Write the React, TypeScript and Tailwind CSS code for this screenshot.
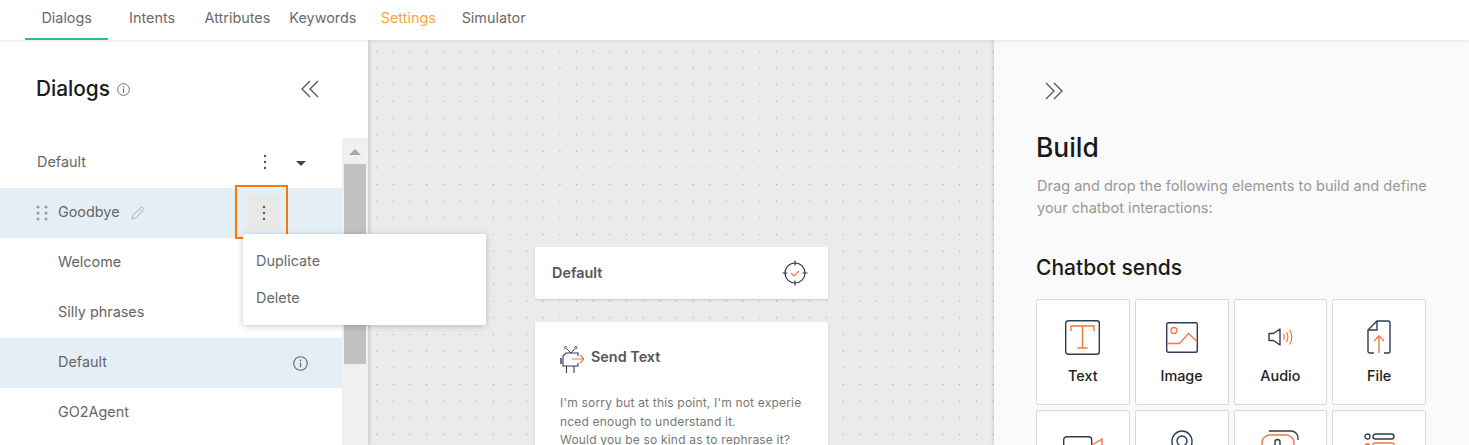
const navy = "#2f3b52";
const orange = "#f9743f";

const tabs = ["Dialogs", "Intents", "Attributes", "Keywords", "Settings", "Simulator"];

const TextIcon = () => (
  <svg width="35" height="35" viewBox="0 0 35 35" fill="none">
    <rect x="0.7" y="0.7" width="33.600" height="33.600" rx="2.500" stroke={navy} strokeWidth="1.400" />
    <path d="M6 11V6h23v5M17.500 6v22M12.500 28h10" stroke={orange} strokeWidth="1.400" />
  </svg>
);

const ImageIcon = () => (
  <svg width="32" height="31" viewBox="0 0 32 31" fill="none">
    <rect x="0.7" y="0.7" width="30.600" height="29.600" rx="1.500" stroke={navy} strokeWidth="1.400" />
    <circle cx="8" cy="8.500" r="3" stroke={orange} strokeWidth="1.300" />
    <path d="M1 21.500h12.500l9-10 8.500 8" stroke={orange} strokeWidth="1.300" />
  </svg>
);

const AudioIcon = () => (
  <svg width="25" height="18" viewBox="0 0 25 18" fill="none">
    <path d="M1 5.500h4.500L12 1v16l-6.500-4.500H1z" stroke={navy} strokeWidth="1.400" strokeLinejoin="round" />
    <path d="M15.500 6c1 2 1 4 0 6M18.500 4c1.800 3.300 1.800 6.700 0 10M21.500 1.500c3 4.800 3 10.200 0 15" stroke={orange} strokeWidth="1.200" />
  </svg>
);

const FileIcon = () => (
  <svg width="24" height="34" viewBox="0 0 24 34" fill="none">
    <path d="M7 33H3a2 2 0 0 1-2-2V10L10 1h11a2 2 0 0 1 2 2v28a2 2 0 0 1-2 2h-4" stroke={navy} strokeWidth="1.400" />
    <path d="M1 10h9V1" stroke={navy} strokeWidth="1.400" />
    <path d="M12 33V16M7 21l5-5 5 5" stroke={orange} strokeWidth="1.400" />
  </svg>
);

const VideoIcon = () => (
  <svg width="40" height="25" viewBox="0 0 40 25" fill="none">
    <rect x="0.7" y="0.7" width="28" height="23.600" rx="3" stroke={navy} strokeWidth="1.400" />
    <path d="M29 9l10-6v19l-10-6" stroke={orange} strokeWidth="1.400" />
  </svg>
);

const LocationIcon = () => (
  <svg width="22" height="36" viewBox="0 0 22 36" fill="none">
    <path d="M11 35C5 26 1 18 1 11a10 10 0 0 1 20 0c0 7-4 15-10 24z" stroke={navy} strokeWidth="1.400" />
    <circle cx="11" cy="11" r="5" stroke={navy} strokeWidth="1.400" />
  </svg>
);

const ButtonIcon = () => (
  <svg width="38" height="36" viewBox="0 0 38 36" fill="none">
    <path d="M8 1h22a7 7 0 0 1 7 7v2" stroke={navy} strokeWidth="1.400" />
    <rect x="1" y="5" width="32" height="19" rx="8" stroke={orange} strokeWidth="1.400" />
    <path d="M14 30V12a2.500 2.500 0 0 1 5 0v18" stroke={navy} strokeWidth="1.400" />
  </svg>
);

const ListIcon = () => (
  <svg width="31" height="30" viewBox="0 0 31 30" fill="none">
    <circle cx="3.500" cy="3.500" r="2.500" stroke={navy} strokeWidth="1.300" />
    <rect x="9" y="1" width="21" height="5" rx="2.500" stroke={navy} strokeWidth="1.400" />
    <circle cx="3.500" cy="13" r="3" fill={orange} />
    <rect x="9" y="10" width="21" height="12" rx="2" stroke={orange} strokeWidth="1.400" />
  </svg>
);

const TargetIcon = () => (
  <svg width="26" height="26" viewBox="0 0 26 26" fill="none">
    <circle cx="13" cy="13" r="10" stroke={navy} strokeWidth="1.200" />
    <path d="M13 0.500v5M13 20.500v5M0.500 13h5M20.500 13h5" stroke={navy} strokeWidth="1.200" />
    <path d="M9 13l3 3 5-5" stroke={orange} strokeWidth="1.200" />
  </svg>
);

const BotIcon = () => (
  <svg width="24" height="27" viewBox="0 0 24 27" fill="none">
    <path d="M6.500 2.500l4.500 4.500 4-4.500" stroke={navy} strokeWidth="1" />
    <circle cx="5.500" cy="1.500" r="1.100" stroke={navy} strokeWidth="0.800" />
    <circle cx="16" cy="1.500" r="1.100" stroke={navy} strokeWidth="0.800" />
    <path d="M18 10V7H6L3 10v10h15v-3" stroke={navy} strokeWidth="1.100" />
    <path d="M1 12v6" stroke={navy} strokeWidth="1.400" />
    <path d="M6.500 20v7M14 20v7" stroke={navy} strokeWidth="1.100" />
    <path d="M12 13h12M20 9l4 4-4 4" stroke={orange} strokeWidth="1.100" />
  </svg>
);

const InfoIcon = ({ size }: { size: number }) => (
  <svg width={size} height={size} viewBox="0 0 14 14" fill="none">
    <circle cx="7" cy="7" r="6.300" stroke="#666" strokeWidth="1" />
    <path d="M7 6v4.500" stroke="#666" strokeWidth="1.100" />
    <circle cx="7" cy="4" r="0.800" fill="#666" />
  </svg>
);

const Kebab = () => (
  <svg width="4" height="16" viewBox="0 0 4 16" fill="#555">
    <circle cx="2" cy="2" r="1.200" />
    <circle cx="2" cy="8" r="1.200" />
    <circle cx="2" cy="14" r="1.200" />
  </svg>
);

const DoubleChevron = ({ flip }: { flip?: boolean }) => (
  <svg width="18" height="18" viewBox="0 0 18 18" fill="none" className={flip ? "rotate-180" : ""}>
    <path d="M9 1L1 9l8 8M17 1L9 9l8 8" stroke="#555" strokeWidth="1.300" />
  </svg>
);

const Grip = () => (
  <svg width="12" height="16" viewBox="0 0 12 16" fill="#9a9a9a">
    <circle cx="2" cy="2" r="1.500" />
    <circle cx="10" cy="2" r="1.500" />
    <circle cx="2" cy="8" r="1.500" />
    <circle cx="10" cy="8" r="1.500" />
    <circle cx="2" cy="14" r="1.500" />
    <circle cx="10" cy="14" r="1.500" />
  </svg>
);

const Pencil = () => (
  <svg width="14" height="14" viewBox="0 0 14 14" fill="none">
    <path d="M1 13l.8-3.500L9.800 1.500a1.200 1.200 0 0 1 1.700 0l1 1a1.200 1.200 0 0 1 0 1.700L4.500 12.200zM8.500 3l2.500 2.500" stroke="#aaa" strokeWidth="1" />
  </svg>
);

// the second row's labels fall below the fold
const tiles = [
  { key: "text", label: "Text", icon: <TextIcon /> },
  { key: "image", label: "Image", icon: <ImageIcon /> },
  { key: "audio", label: "Audio", icon: <AudioIcon /> },
  { key: "file", label: "File", icon: <FileIcon /> },
  { key: "video", icon: <VideoIcon /> },
  { key: "location", icon: <LocationIcon /> },
  { key: "button", icon: <ButtonIcon /> },
  { key: "list", icon: <ListIcon /> },
];

export default function App() {
  return (
    <div className="h-[445px] w-[1469px] overflow-hidden bg-white font-['Inter',sans-serif] text-[14.4px] text-[#666]">
      <nav className="relative z-20 flex h-[40px] bg-white pl-6 shadow-[0_1px_3px_rgba(0,0,0,0.1)]">
        {tabs.map((tab) => (
          <div
            key={tab}
            className={`flex h-[40px] items-center justify-center whitespace-nowrap border-b-[2px] pb-[2px] ${
              tab === "Dialogs" ? "mx-[1px] w-[83.4px] border-[#2fb896]" : "w-[85.4px] border-transparent"
            } ${tab === "Settings" ? "text-[#f5a83c]" : "text-[#6b6b6b]"}`}
          >
            {tab}
          </div>
        ))}
      </nav>

      <div className="flex h-[405px]">
        {/* left panel */}
        <aside className="relative z-10 flex w-[368px] shrink-0 flex-col overflow-visible bg-white shadow-[1px_0_4px_rgba(0,0,0,0.18)]">
          <div className="flex h-[98px] items-center justify-between pl-9 pr-[49px]">
            <div className="flex items-center gap-[7px]">
              <h1 className="text-[20.8px] font-medium text-[#1a1a1a]">Dialogs</h1>
              <InfoIcon size={13} />
            </div>
            <DoubleChevron />
          </div>

          <div className="flex min-h-0 flex-1">
            <div className="w-[342px]">
              <div className="flex h-[50px] items-center pl-[37px] pr-[36px]">
                <span className="flex-1 pb-[2px]">Default</span>
                <span className="flex w-[43px] items-center justify-between">
                  <span className="-mt-[2px]">
                    <Kebab />
                  </span>
                  <span className="h-0 w-0 border-x-[5px] border-t-[5px] border-x-transparent border-t-[#444]" />
                </span>
              </div>
              <div className="flex h-[50px] items-center bg-[#e4eef7]">
                <div className="flex w-[235px] items-center pl-[36px]">
                  <Grip />
                  <span className="ml-[10px] mr-[11px] pb-[2px]">Goodbye</span>
                  <Pencil />
                </div>
                <div className="relative -mt-[3px] flex h-[54px] w-[53px] items-start self-start border-[2px] border-[#f57c00] pl-[10px] pt-[9px]">
                  <div className="flex h-[34px] w-[33px] items-center justify-center rounded-[2px] bg-[#e8e8e6]">
                    <Kebab />
                  </div>
                  <div className="absolute left-[6px] top-[47px] z-30 flex h-[91px] w-[243px] flex-col rounded-[2px] bg-white pl-[13px] pt-[8px] shadow-[0_1px_6px_rgba(0,0,0,0.22)]">
                    <div className="flex h-[37px] items-center text-[#6b6b6b]">Duplicate</div>
                    <div className="flex h-[37px] items-center text-[#6b6b6b]">Delete</div>
                  </div>
                </div>
              </div>
              <div className="flex h-[50px] items-center pb-[2px] pl-[58px]">Welcome</div>
              <div className="flex h-[50px] items-center pb-[2px] pl-[58px]">Silly phrases</div>
              <div className="flex h-[50px] items-center justify-between bg-[#e4eef7] pl-[58px] pr-[34px]">
                <span className="pb-[2px]">Default</span>
                <InfoIcon size={15} />
              </div>
              <div className="flex h-[50px] items-center pb-[2px] pl-[58px]">GO2Agent</div>
            </div>

            <div className="flex w-[26px] flex-col items-center bg-[#f0f0f0] pt-[11px]">
              <span className="h-0 w-0 border-x-[6px] border-b-[6px] border-x-transparent border-b-[#a8a8a8]" />
              <div className="mt-[9px] h-[200px] w-[22px] bg-[#c1c1c1]" />
            </div>
          </div>
        </aside>

        {/* canvas */}
        <main className="flex flex-1 flex-col gap-[23px] bg-[#ebebeb] bg-[radial-gradient(#9a9a9a_0.7px,transparent_0.8px)] bg-[length:16.67px_16.67px] bg-[position:0.4px_3px] pl-[167px] pt-[207px]">
          <div className="flex h-[52px] w-[293px] shrink-0 items-center justify-between rounded-[2px] bg-white pl-[17px] pr-[20px] shadow-[0_1px_2px_rgba(0,0,0,0.15)]">
            <span className="font-semibold text-[#555]">Default</span>
            <TargetIcon />
          </div>
          <div className="h-[200px] w-[293px] shrink-0 rounded-[2px] bg-white pl-[25px] pr-[20px] pt-[24px] shadow-[0_1px_2px_rgba(0,0,0,0.15)]">
            <div className="flex items-start gap-[7px]">
              <BotIcon />
              <span className="font-semibold text-[#555]">Send Text</span>
            </div>
            <p className="mt-[21px] whitespace-nowrap text-[12px] leading-[18.6px] tracking-[0.19px] text-[#777]">
              I'm sorry but at this point, I'm not experie
              <br />
              nced enough to understand it.
              <br />
              Would you be so kind as to rephrase it?
            </p>
          </div>
        </main>

        {/* build panel */}
        <aside className="relative z-10 w-[475px] shrink-0 bg-[#fafafa] pl-[43px] shadow-[-1px_0_3px_rgba(0,0,0,0.12)]">
          <div className="ml-[8px] mt-[42px]">
            <DoubleChevron flip />
          </div>
          <h2 className="-ml-px mt-[29px] text-[26.4px] font-medium leading-[36px] text-[#1a1a1a]">Build</h2>
          <p className="mt-[10px] whitespace-nowrap text-[14.55px] leading-[22px] text-[#999]">
            Drag and drop the following elements to build and define
            <br />
            your chatbot interactions:
          </p>
          <h3 className="-ml-px mt-[35px] text-[21px] font-medium leading-[28px] text-[#1a1a1a]">Chatbot sends</h3>
          <div className="-ml-px mt-[17px] grid w-[390px] grid-cols-4 gap-[5px]">
            {tiles.map((t) => (
              <div
                key={t.key}
                className="flex h-[106px] flex-col items-center rounded-[2px] border border-[#d9d9d9] bg-white"
              >
                <div className="flex h-[66px] w-full items-center justify-center pt-[9px] pb-[1px]">{t.icon}</div>
                {t.label && <span className="font-medium leading-[20px] text-[#222]">{t.label}</span>}
              </div>
            ))}
          </div>
        </aside>
      </div>
    </div>
  );
}
